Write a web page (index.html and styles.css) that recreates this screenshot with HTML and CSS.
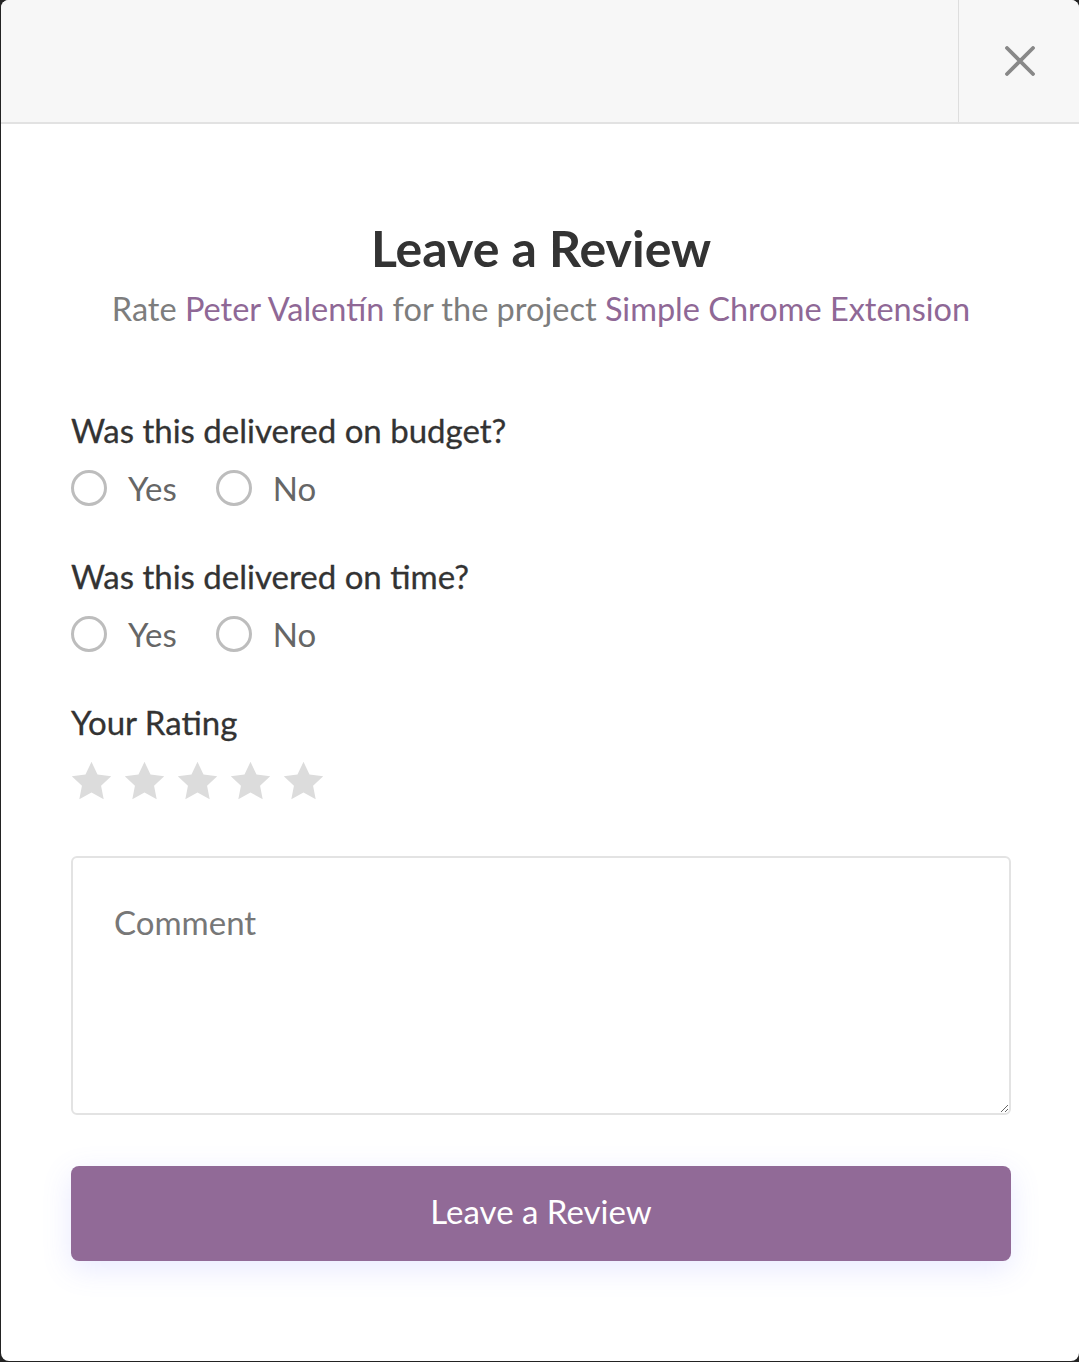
FILE: index.html
```html
<!DOCTYPE html>
<html lang="en">
<head>
<meta charset="utf-8">
<title>Leave a Review</title>
<link rel="stylesheet" href="styles.css">
</head>
<body>
<div class="modal">
  <div class="modal-header">
    <div class="header-space"></div>
    <button class="close-btn" aria-label="Close">
      <svg width="30" height="30" viewBox="0 0 30 30"><path d="M2 2L28 28M28 2L2 28" stroke="#888" stroke-width="3.8" stroke-linecap="round"/></svg>
    </button>
  </div>
  <div class="modal-body">
    <h1 class="title">Leave a Review</h1>
    <p class="subtitle">Rate <a class="link">Peter Valentín</a> for the project <a class="link">Simple Chrome Extension</a></p>

    <div class="question">
      <div class="q-label">Was this delivered on budget?</div>
      <div class="options">
        <label class="option"><input type="radio" name="budget" class="radio"><span>Yes</span></label>
        <label class="option"><input type="radio" name="budget" class="radio"><span>No</span></label>
      </div>
    </div>

    <div class="question">
      <div class="q-label">Was this delivered on time?</div>
      <div class="options">
        <label class="option"><input type="radio" name="time" class="radio"><span>Yes</span></label>
        <label class="option"><input type="radio" name="time" class="radio"><span>No</span></label>
      </div>
    </div>

    <div class="question">
      <div class="q-label">Your Rating</div>
      <div class="stars">
        <svg class="star" viewBox="0 0 24 24"><path d="M12 1.5l3.2 6.8 7.3.9-5.4 5 1.4 7.3L12 17.9l-6.5 3.6 1.4-7.3-5.4-5 7.3-.9z"/></svg>
        <svg class="star" viewBox="0 0 24 24"><path d="M12 1.5l3.2 6.8 7.3.9-5.4 5 1.4 7.3L12 17.9l-6.5 3.6 1.4-7.3-5.4-5 7.3-.9z"/></svg>
        <svg class="star" viewBox="0 0 24 24"><path d="M12 1.5l3.2 6.8 7.3.9-5.4 5 1.4 7.3L12 17.9l-6.5 3.6 1.4-7.3-5.4-5 7.3-.9z"/></svg>
        <svg class="star" viewBox="0 0 24 24"><path d="M12 1.5l3.2 6.8 7.3.9-5.4 5 1.4 7.3L12 17.9l-6.5 3.6 1.4-7.3-5.4-5 7.3-.9z"/></svg>
        <svg class="star" viewBox="0 0 24 24"><path d="M12 1.5l3.2 6.8 7.3.9-5.4 5 1.4 7.3L12 17.9l-6.5 3.6 1.4-7.3-5.4-5 7.3-.9z"/></svg>
      </div>
    </div>

    <textarea class="comment" placeholder="Comment"></textarea>

    <button class="submit">Leave a Review</button>
  </div>
</div>
</body>
</html>
```
FILE: styles.css
```css
* { box-sizing: border-box; }
html, body { margin: 0; padding: 0; }
body {
  background: #232323;
  font-family: "Lato", "Noto Sans", sans-serif;
  height: 1362px;
  overflow: hidden;
}
.modal {
  margin-left: 1px;
  width: 1078px;
  height: 1361px;
  background: #fff;
  border-radius: 8px;
  overflow: hidden;
  display: flex;
  flex-direction: column;
}
.modal-header {
  display: flex;
  height: 124px;
  flex: none;
  background: #f7f7f7;
  border-bottom: 2px solid #e2e2e2;
}
.header-space { flex: 1; }
.close-btn {
  width: 121px;
  border: none;
  border-left: 1px solid #dedede;
  background: transparent;
  display: flex;
  align-items: center;
  justify-content: center;
  padding: 0 0 0 2px;
  cursor: pointer;
}
.modal-body {
  padding: 95px 68px 0 70px;
  display: flex;
  flex-direction: column;
}
.title {
  margin: 0;
  text-align: center;
  font-size: 50px;
  line-height: 58px;
  font-weight: 700;
  color: #333;
}
.subtitle {
  margin: 7px 0 0;
  text-align: center;
  font-size: 32.5px;
  line-height: 50px;
  color: #7d7d7d;
}
.link { color: #8f6896; text-decoration: none; }
.question { margin-top: 74px; }
.question + .question { margin-top: 44px; }
.q-label {
  font-size: 33px;
  line-height: 44px;
  color: #333;
  font-weight: 400;
  -webkit-text-stroke: 0.3px #333;
}
.options {
  display: flex;
  gap: 39px;
  margin-top: 14px;
  height: 44px;
  align-items: center;
}
.option {
  display: flex;
  align-items: center;
  gap: 21px;
  font-size: 33px;
  color: #666;
  cursor: pointer;
}
.radio {
  appearance: none;
  -webkit-appearance: none;
  margin: 0;
  width: 36px;
  height: 36px;
  border: 3px solid #bdbdbd;
  border-radius: 50%;
  background: #fff;
}
.stars {
  display: flex;
  gap: 8px;
  margin-top: 15px;
  margin-left: -2px;
}
.star { width: 45px; height: 45px; fill: #dcdcdc; }
.comment {
  margin-top: 52px;
  width: 100%;
  height: 259px;
  border: 2px solid #e3e3e3;
  border-radius: 6px;
  padding: 44px 41px;
  font-family: inherit;
  font-size: 33px;
  line-height: 40px;
  color: #333;
  resize: vertical;
  outline: none;
}
.comment::placeholder { color: #777; }
.submit {
  margin-top: 51px;
  height: 95px;
  width: 100%;
  border: none;
  border-radius: 8px;
  background: #916a97;
  color: #fff;
  font-family: inherit;
  font-size: 33px;
  line-height: 1;
  padding: 0 0 4px;
  box-shadow: 0 8px 30px rgba(110, 120, 255, 0.16);
  cursor: pointer;
}
```
